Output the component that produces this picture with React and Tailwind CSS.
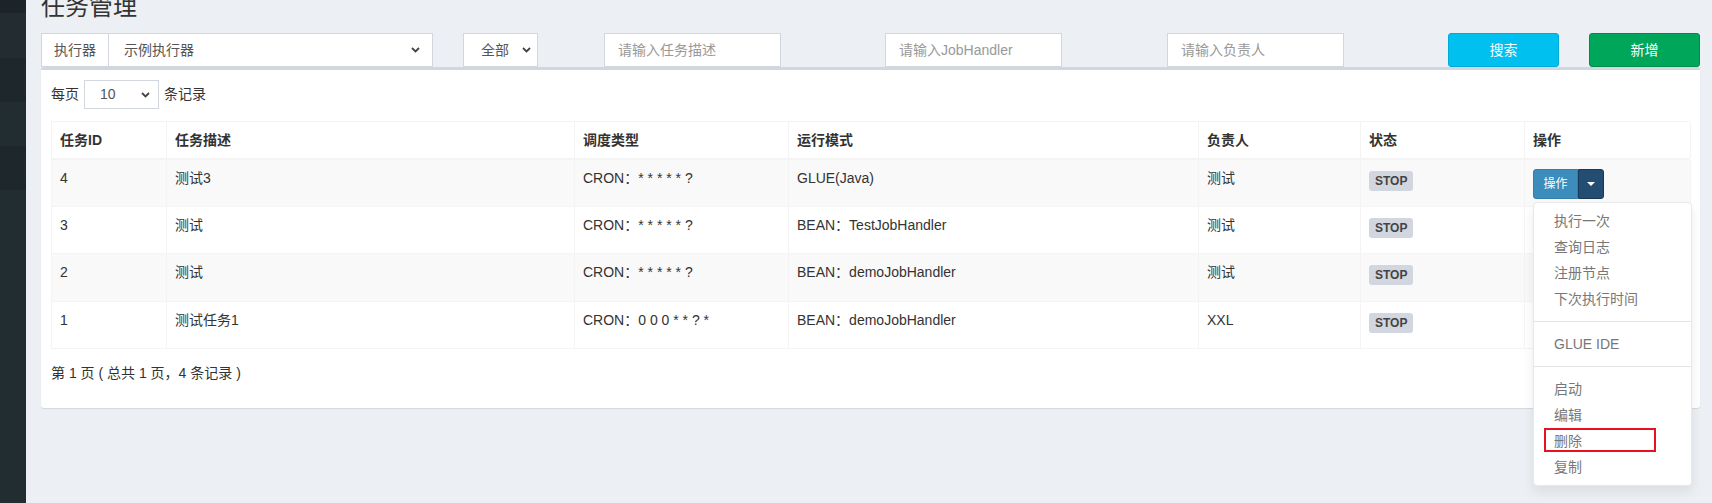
import React from 'react';

const FONT = { fontFamily: '"Liberation Sans", "Noto Sans CJK SC", sans-serif' };

const COLUMNS = [
  { label: '任务ID', w: 'w-[115px]' },
  { label: '任务描述', w: 'w-[408px]' },
  { label: '调度类型', w: 'w-[214px]' },
  { label: '运行模式', w: 'w-[410px]' },
  { label: '负责人', w: 'w-[162px]' },
  { label: '状态', w: 'w-[164px]' },
  { label: '操作', w: 'w-[166px]' },
];

const ROWS = [
  { id: '4', desc: '测试3', cron: 'CRON：* * * * * ?', mode: 'GLUE(Java)', owner: '测试', h: 'h-[47px]' },
  { id: '3', desc: '测试', cron: 'CRON：* * * * * ?', mode: 'BEAN：TestJobHandler', owner: '测试', h: 'h-[47px]' },
  { id: '2', desc: '测试', cron: 'CRON：* * * * * ?', mode: 'BEAN：demoJobHandler', owner: '测试', h: 'h-[48px]' },
  { id: '1', desc: '测试任务1', cron: 'CRON：0 0 0 * * ? *', mode: 'BEAN：demoJobHandler', owner: 'XXL', h: 'h-[47px]' },
];

const MENU = [
  ['执行一次', '查询日志', '注册节点', '下次执行时间'],
  ['GLUE IDE'],
  ['启动', '编辑', '删除', '复制'],
];

function Chevron() {
  return (
    <svg width="9" height="6" viewBox="0 0 9 6" className="shrink-0">
      <polyline points="1,1 4.5,4.5 8,1" fill="none" stroke="#444" strokeWidth="1.8" />
    </svg>
  );
}

function FakeSelect({ value, className = '' }) {
  return (
    <div className={`flex items-center justify-between border border-[#d2d6de] bg-white text-[14px] text-[#555] ${className}`}>
      <span>{value}</span>
      <Chevron />
    </div>
  );
}

function OpsMenu() {
  return (
    <div className="absolute left-[8px] top-[42px] z-10 w-[159px] rounded-[4px] border border-[#e8e8e8] bg-white py-[5px] shadow-[0_6px_12px_rgba(0,0,0,0.08)]">
      {MENU.map((group, gi) => (
        <div key={gi}>
          {gi > 0 && <div className="my-[9px] h-px bg-[#e5e5e5]" />}
          {group.map((item) => (
            <div key={item} className="relative h-[26px] px-[20px] text-[14px] leading-[26px] text-[#777]">
              {item}
              {item === '删除' && (
                <div className="absolute left-[10px] top-0 h-[24px] w-[112px] border-2 border-[#e8141d]" />
              )}
            </div>
          ))}
        </div>
      ))}
    </div>
  );
}

export default function App() {
  return (
    <div className="flex h-[503px] w-full overflow-hidden bg-[#ecf0f5]" style={FONT}>
      {/* sidebar strip */}
      <div className="flex w-[26px] shrink-0 flex-col bg-[#222d32]">
        <div className="h-[13px] bg-[#1c2428]" />
        <div className="h-[45px] bg-[#222c31]" />
        <div className="h-[44px] bg-[#1e272b]" />
        <div className="h-[44px] bg-[#222d32]" />
        <div className="h-[44px] bg-[#1e282c]" />
        <div className="flex-1 bg-[#222d32]" />
      </div>

      <div className="relative flex-1">
        <h1 className="ml-[15px] mt-[-5px] text-[24px] leading-[24px] text-[#333]">任务管理</h1>

        {/* filters */}
        <div className="mt-[14px] grid h-[34px] grid-cols-[422px_141px_281px_282px_281px_141px_141px]">
          <div className="flex px-[15px]">
            <div className="flex w-[68px] items-center justify-center border border-[#d2d6de] bg-white text-[14px] text-[#555]">执行器</div>
            <FakeSelect value="示例执行器" className="ml-[-1px] flex-1 pl-[15px] pr-[12px]" />
          </div>
          <div className="px-[15px]">
            <FakeSelect value="全部" className="h-full w-[75px] pl-[17px] pr-[6px]" />
          </div>
          {['请输入任务描述', '请输入JobHandler', '请输入负责人'].map((ph) => (
            <div key={ph} className="px-[15px]">
              <div className="flex h-full w-[177px] items-center border border-[#d2d6de] bg-white pl-[13px] text-[14px] text-[#999]">{ph}</div>
            </div>
          ))}
          <div className="px-[15px]">
            <div className="flex h-full items-center justify-center rounded-[3px] border border-[#00acd6] bg-[#00c0ef] text-[14px] text-white">搜索</div>
          </div>
          <div className="px-[15px]">
            <div className="flex h-full items-center justify-center rounded-[3px] border border-[#008d4c] bg-[#00a65a] text-[14px] text-white">新增</div>
          </div>
        </div>

        {/* box */}
        <div className="ml-[15px] w-[1659px] rounded-[3px] border-t-[3px] border-[#d2d6de] bg-white px-[10px] pb-[25px] pt-[10px] shadow-[0_1px_1px_rgba(0,0,0,0.1)]">
          <div className="flex h-[29px] items-center gap-[5px] text-[14px] text-[#333]">
            <span>每页</span>
            <FakeSelect value="10" className="h-[29px] w-[75px] pl-[15px] pr-[8px]" />
            <span>条记录</span>
          </div>

          <div className="mt-[12px] w-[1639px] border-l border-t border-[#f4f4f4] text-[14px] text-[#333]">
            <div className="flex h-[38px] border-b-2 border-[#f4f4f4]">
              {COLUMNS.map((c) => (
                <div key={c.label} className={`${c.w} flex shrink-0 items-center border-r border-[#f4f4f4] px-[8px] font-bold`}>
                  {c.label}
                </div>
              ))}
            </div>
            {ROWS.map((r, i) => {
              const cells = [r.id, r.desc, r.cron, r.mode, r.owner];
              return (
                <div key={r.id} className={`flex ${r.h} border-b border-[#f4f4f4] ${i % 2 === 0 ? 'bg-[#f9f9f9]' : 'bg-white'}`}>
                  {cells.map((v, ci) => (
                    <div key={ci} className={`${COLUMNS[ci].w} shrink-0 border-r border-[#f4f4f4] px-[8px] pt-[8px] leading-[20px]`}>
                      {v}
                    </div>
                  ))}
                  <div className={`${COLUMNS[5].w} shrink-0 border-r border-[#f4f4f4] px-[8px] pt-[10px]`}>
                    <span className="inline-block h-[20px] rounded-[3px] bg-[#d2d6de] px-[6px] text-[12px] font-bold leading-[20px] text-[#444]">STOP</span>
                  </div>
                  <div className={`${COLUMNS[6].w} relative shrink-0 border-r border-[#f4f4f4] px-[8px] pt-[9px]`}>
                    {i === 0 && (
                      <>
                        <div className="flex h-[30px] w-[71px]">
                          <div className="flex w-[45px] items-center justify-center rounded-l-[3px] border border-[#367fa9] bg-[#3c8dbc] text-[12px] text-white">操作</div>
                          <div className="flex w-[26px] items-center justify-center rounded-r-[3px] border border-[#183a57] bg-[#234d72]">
                            <div className="h-0 w-0 border-x-[4px] border-t-[4px] border-x-transparent border-t-white" />
                          </div>
                        </div>
                        <OpsMenu />
                      </>
                    )}
                  </div>
                </div>
              );
            })}
          </div>

          <div className="mt-[14px] text-[14px] leading-[20px] text-[#333]">第 1 页 ( 总共 1 页，4 条记录 )</div>
        </div>
      </div>
    </div>
  );
}
